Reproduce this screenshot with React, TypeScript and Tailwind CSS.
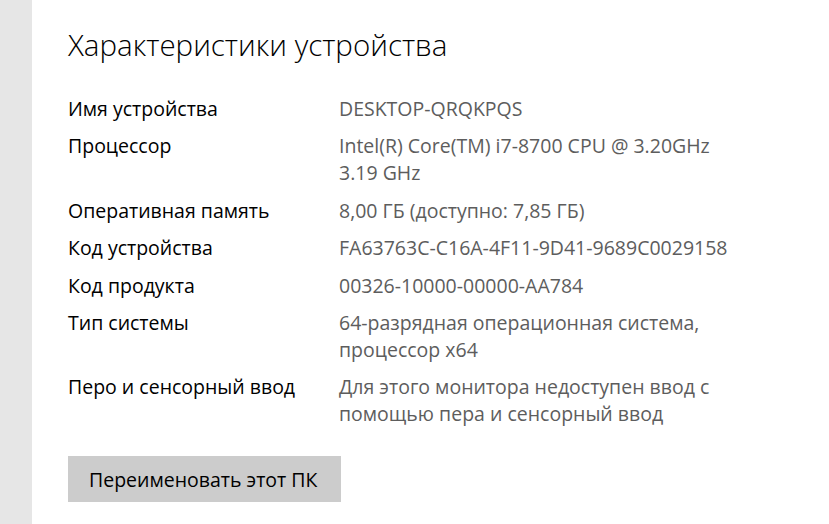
export default function App() {
  const rows: { label: string; value: string[] }[] = [
    { label: "Имя устройства", value: ["DESKTOP-QRQKPQS"] },
    { label: "Процессор", value: ["Intel(R) Core(TM) i7-8700 CPU @ 3.20GHz", "3.19 GHz"] },
    { label: "Оперативная память", value: ["8,00 ГБ (доступно: 7,85 ГБ)"] },
    { label: "Код устройства", value: ["FA63763C-C16A-4F11-9D41-9689C0029158"] },
    { label: "Код продукта", value: ["00326-10000-00000-AA784"] },
    { label: "Тип системы", value: ["64-разрядная операционная система,", "процессор x64"] },
    { label: "Перо и сенсорный ввод", value: ["Для этого монитора недоступен ввод с", "помощью пера и сенсорный ввод"] },
  ];

  return (
    <div className="flex h-[524px] w-[829px] overflow-hidden bg-white font-['Open_Sans',sans-serif]">
      {/* left strip */}
      <div className="w-8 shrink-0 bg-[#e6e6e6]" />

      <div className="flex flex-col pl-9 pt-[25px]">
        <h1 className="text-[29.5px] font-light leading-10 text-black">
          Характеристики устройства
        </h1>

        <div className="mt-[30px] flex flex-col gap-[10.4px]">
          {rows.map((r) => (
            <div key={r.label} className="flex text-[19.5px] leading-[27px]">
              <div className="w-[271px] shrink-0 text-black">{r.label}</div>
              <div className="text-[#5d5d5d]">
                {r.value.map((v) => (
                  <div key={v}>{v}</div>
                ))}
              </div>
            </div>
          ))}
        </div>

        <button className="mt-[29px] h-[46px] w-[273px] bg-[#cccccc] px-[21px] text-left text-[19.5px] text-black">
          Переименовать этот ПК
        </button>
      </div>
    </div>
  );
}
